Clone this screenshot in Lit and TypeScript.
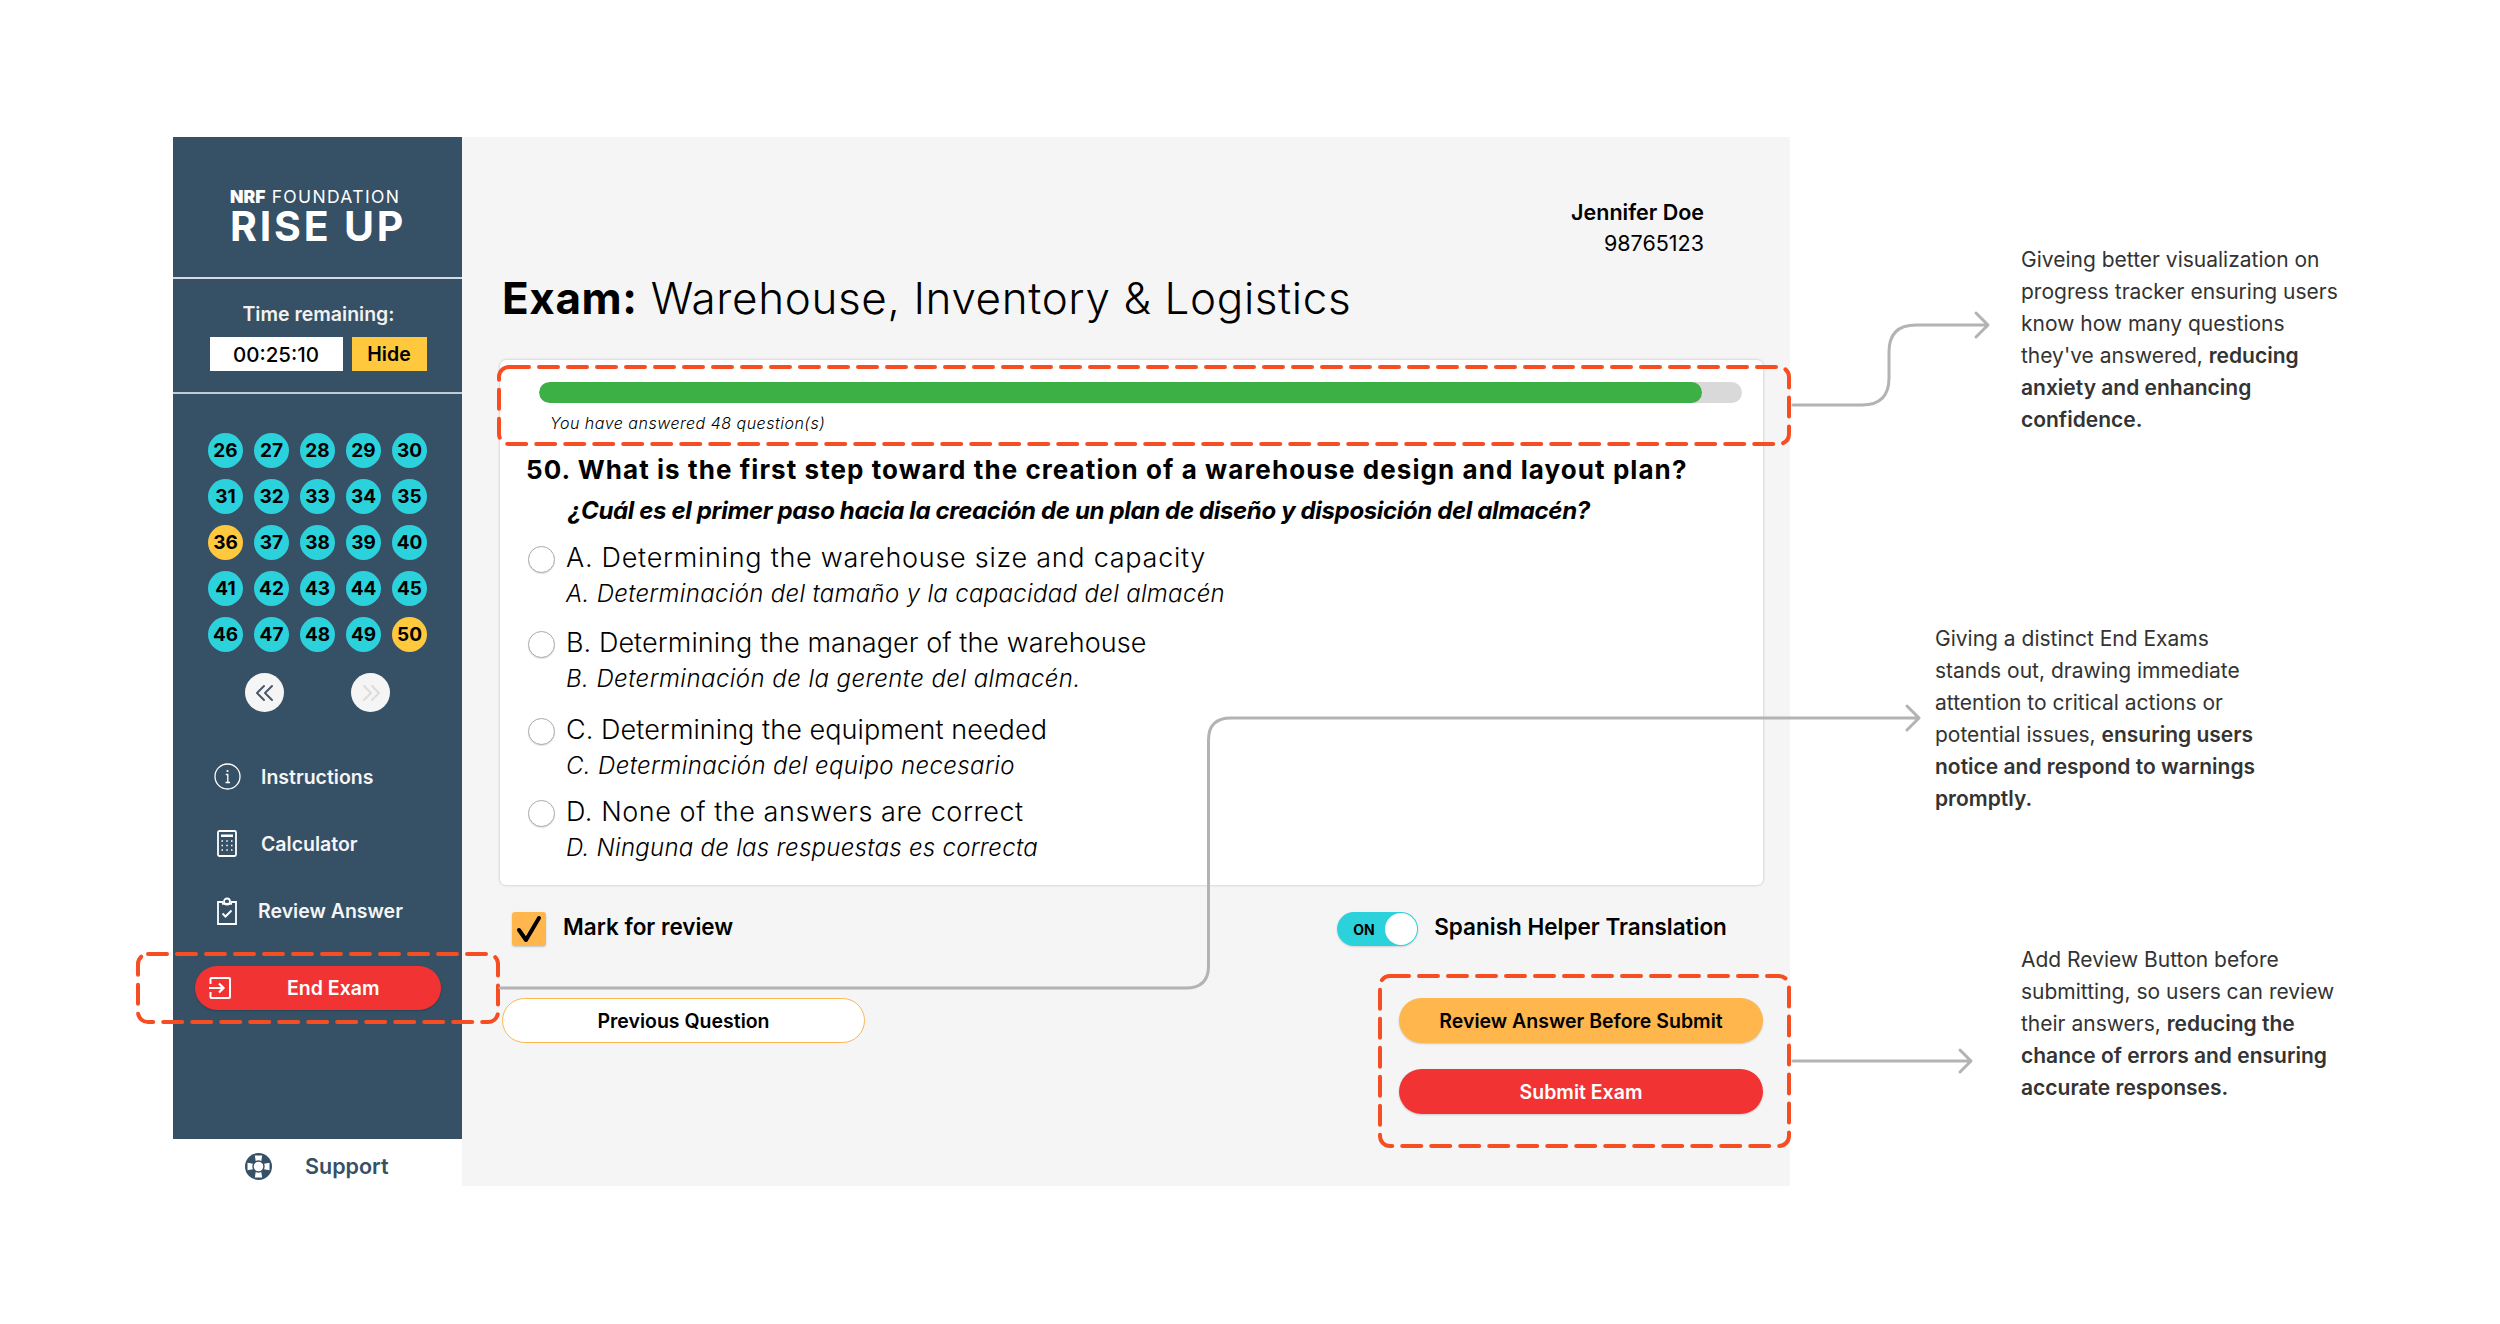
import { LitElement, html, css, svg } from "lit";
import { customElement } from "lit/decorators.js";

const ROWS = [26, 27, 28, 29, 30, 31, 32, 33, 34, 35, 36, 37, 38, 39, 40, 41, 42, 43, 44, 45, 46, 47, 48, 49, 50];
const FLAGGED = new Set([36, 50]);
const OPTIONS = [
  ["A. Determining the warehouse size and capacity", "A. Determinación del tamaño y la capacidad del almacén"],
  ["B. Determining the manager of the warehouse", "B. Determinación de la gerente del almacén."],
  ["C. Determining the equipment needed", "C. Determinación del equipo necesario"],
  ["D. None of the answers are correct", "D. Ninguna de las respuestas es correcta"],
];

@customElement("app-root")
export class AppRoot extends LitElement {
  static styles = css`
    :host { display: block; position: relative; width: 2500px; height: 1324px; background: #fff; overflow: hidden;
      font-family: Inter, "Liberation Sans", sans-serif; color: #000; }
    * { box-sizing: border-box; }
    .page { display: flex; align-items: flex-start; padding: 137px 0 0 173px; }
    .screen { display: grid; grid-template-columns: 289px 1328px; width: 1617px; height: 1049px; flex: none; }

    .side { display: flex; flex-direction: column; }
    .dark { height: 1002px; background: #365066; color: #fff; display: flex; flex-direction: column; }
    .logo { height: 142px; border-bottom: 2px solid #d5dbe0; padding: 51px 0 0 57px; display: flex; flex-direction: column; }
    .logo-top { font-size: 17.5px; line-height: 18px; white-space: nowrap; letter-spacing: 1.35px; font-weight: 400; }
    .logo-top b { font-weight: 900; letter-spacing: 0; }
    .logo-main { font-size: 41px; line-height: 34px; margin-top: 3px; font-weight: 700; letter-spacing: 2.8px; white-space: nowrap; }
    .timer { height: 115px; border-bottom: 2px solid #c3cbd2; display: flex; flex-direction: column; align-items: center; }
    .timer-label { margin-top: 23px; font-size: 19.5px; line-height: 24px; font-weight: 600; color: #f2f2f2; white-space: nowrap; padding-left: 2px; }
    .timer-row { display: flex; gap: 9px; margin-top: 11px; padding-left: 1px; }
    .time { width: 133px; height: 34px; background: #fff; color: #000; font-size: 20.5px; font-weight: 500; display: flex; align-items: center; justify-content: center; }
    .hide { width: 75px; height: 34px; background: #ffc83d; color: #000; font-size: 19.5px; font-weight: 600; display: flex; align-items: center; justify-content: center; }
    .grid { display: grid; grid-template-columns: repeat(5, 35px); gap: 11px; margin: 39px 0 0 35px; }
    .q { width: 35px; height: 35px; border-radius: 50%; background: #2bd2dc; color: #000; font-size: 19px; font-weight: 700; display: flex; align-items: center; justify-content: center; }
    .q.flag { background: #ffc83d; }
    .pager { display: flex; gap: 67px; margin: 21px 0 0 72px; }
    .round { width: 39px; height: 39px; border-radius: 50%; background: #f5f5f5; display: flex; align-items: center; justify-content: center; }
    .nav { display: flex; flex-direction: column; margin-top: 31px; }
    .nav-item { height: 67px; display: flex; align-items: center; font-size: 19.5px; font-weight: 600; color: #f5f5f5; white-space: nowrap; }
    .nav-ico { width: 88px; display: flex; justify-content: flex-start; padding-left: 41px; flex: none; }
    .nav-ico.tight { width: 85px; padding-left: 44px; }
    .nav-ico.mid { padding-left: 44px; }
    .end { margin: 22px 0 0 22px; width: 246px; height: 44px; border-radius: 22px; background: #f23333; color: #fff; display: flex; align-items: center; font-size: 19.5px; font-weight: 600; padding-left: 14px; box-shadow: 0 1px 2px rgba(0,0,0,.2); }
    .end span { margin-left: 56px; }
    .support { height: 46px; display: flex; align-items: center; padding: 8px 0 0 72px; color: #365066; font-size: 21.5px; font-weight: 600; }
    .support span { margin-left: 33px; }

    .main { background: #f5f5f5; padding: 60px 27px 0 38px; display: flex; flex-direction: column; }
    .user { text-align: right; font-size: 21.5px; line-height: 31px; color: #000; margin-right: 59px; }
    .user b { display: block; font-weight: 600; }
    .title { margin: 11px 0 0 2px; font-size: 44px; line-height: 56px; font-weight: 300; letter-spacing: 0.62px; white-space: nowrap; }
    .title b { font-weight: 700; }
    .card { margin-top: 34px; height: 525px; background: #fff; border-radius: 6px; box-shadow: 0 0 3px rgba(0,0,0,.24); padding: 22px 21px 0 27px; }
    .track { margin-left: 12px; height: 21px; border-radius: 10.5px; background: #d9d9d9; overflow: hidden; }
    .fill { height: 100%; border-radius: 10.5px; background: #3cb045; }
    .note { margin: 9px 0 0 23px; font-size: 16px; line-height: 22px; font-style: italic; font-weight: 300; letter-spacing: 0.5px; }
    .ask { margin: 18px 0 0 -1px; font-size: 26px; line-height: 36px; font-weight: 700; letter-spacing: 1.07px; white-space: nowrap; }
    .ask-es { margin: 6px 0 0 41px; font-size: 24px; line-height: 34px; font-weight: 700; font-style: italic; letter-spacing: -0.35px; white-space: nowrap; }
    .opts { margin-top: 12px; display: flex; flex-direction: column; }
    .opt { display: grid; grid-template-columns: 39px 1fr; height: 71px; }
    .opt + .opt { margin-top: 14px; }
    .opt:nth-child(3) { margin-top: 16px; }
    .opt:nth-child(4) { margin-top: 11px; }
    .radio { width: 27px; height: 27px; margin: 6px 0 0 1px; border-radius: 50%; border: 1.5px solid #aaa; background: #fff; box-shadow: 0 1px 1px rgba(0,0,0,.12); }
    .en { font-size: 27px; line-height: 36px; font-weight: 300; white-space: nowrap; }
    .opt:nth-child(1) .en { letter-spacing: 0.73px; }
    .opt:nth-child(2) .en { letter-spacing: 0.06px; }
    .opt:nth-child(3) .en { letter-spacing: 0.06px; }
    .opt:nth-child(4) .en { letter-spacing: 0.56px; }
    .es { font-size: 24px; line-height: 35px; font-style: italic; font-weight: 300; letter-spacing: 0.32px; white-space: nowrap; }
    .opt:nth-child(2) .es { letter-spacing: 0.44px; }
    .opt:nth-child(3) .es { letter-spacing: 0.38px; }
    .opt:nth-child(4) .es { letter-spacing: 0.27px; }

    .controls { margin: 27px 0 0 12px; display: flex; align-items: center; height: 34px; }
    .check { width: 34px; height: 34px; border-radius: 3px; background: #ffb74d; box-shadow: 0 1px 2px rgba(0,0,0,.2); display: flex; align-items: center; justify-content: center; }
    .lbl { font-size: 22.5px; font-weight: 600; line-height: 30px; padding-bottom: 4px; white-space: nowrap; }
    .mark { margin-left: 17px; }
    .toggle { margin-left: 604px; width: 81px; height: 34px; border-radius: 17px; background: #2bd2dc; box-shadow: 0 1px 2px rgba(0,0,0,.15); padding: 1px 1px 1px 0; display: flex; align-items: center; justify-content: space-between; font-size: 14px; font-weight: 700; }
    .toggle span { margin-left: 16px; }
    .knob { width: 32px; height: 32px; border-radius: 50%; background: #fff; }
    .sp { margin-left: 16px; }
    .actions { margin-top: 52px; display: flex; justify-content: space-between; align-items: flex-start; }
    .btn { height: 45px; border-radius: 22.5px; display: flex; align-items: center; justify-content: center; font-size: 19.5px; font-weight: 600; white-space: nowrap; }
    .prev { width: 363px; margin-left: 2px; background: #fff; border: 1.5px solid #ffb74d; }
    .stack { display: flex; flex-direction: column; gap: 26px; }
    .wide { width: 364px; box-shadow: 0 1px 2px rgba(0,0,0,.18); }
    .amber { background: #ffb74d; }
    .red { background: #f23333; color: #fff; }

    .notes { flex: none; display: flex; flex-direction: column; padding-top: 107px; }
    .an { font-size: 21px; line-height: 32px; color: #333; white-space: pre-line; }
    .an b { font-weight: 600; }
    .an1 { margin-left: 231px; }
    .an2 { margin: 187px 0 0 145px; }
    .an3 { margin: 129px 0 0 231px; }

    .over { position: absolute; left: 0; top: 0; width: 2500px; height: 1324px; pointer-events: none; }
    .dash { fill: none; stroke: #f64d23; stroke-width: 4; stroke-dasharray: 19 10; stroke-linecap: round; }
    .conn { fill: none; stroke: #b3b3b3; stroke-width: 3; stroke-linecap: round; stroke-linejoin: round; }
  `;

  private chevrons(color: string, flip: boolean) {
    return html`<svg width="20" height="18" viewBox="0 0 20 18" fill="none" stroke=${color} stroke-width="2" stroke-linecap="round" stroke-linejoin="round">
      <g transform=${flip ? "translate(20,0) scale(-1,1)" : ""}>
        ${svg`<path d="M9 2 2 9l7 7M17 2l-7 7 7 7" />`}
      </g></svg>`;
  }

  private overlay() {
    return svg`
      <path class="dash" d="M510 367H1779a10 10 0 0 1 10 10V434a10 10 0 0 1-10 10H509a10 10 0 0 1-10-10V377a10 10 0 0 1 10-10z" />
      <path class="dash" d="M148 954H488a10 10 0 0 1 10 10V1012a10 10 0 0 1-10 10H148a10 10 0 0 1-10-10V964a10 10 0 0 1 10-10z" />
      <path class="dash" d="M1390 976H1779a10 10 0 0 1 10 10V1136a10 10 0 0 1-10 10H1390a10 10 0 0 1-10-10V986a10 10 0 0 1 10-10z" />
      <path class="conn" d="M1793 405H1862Q1889 405 1889 378V352Q1889 325 1916 325H1987M1976 313 1988 325 1976 337" />
      <path class="conn" d="M500 988H1186Q1208.5 988 1208.500 966V740Q1208.500 718 1231 718H1918M1907 706 1919 718 1907 730" />
      <path class="conn" d="M1793 1061H1970M1960 1050 1971 1061 1960 1072" />
    `;
  }

  render() {
    return html`
      <div class="page">
        <div class="screen">
          <aside class="side">
            <div class="dark">
              <div class="logo">
                <div class="logo-top"><b>NRF</b> FOUNDATION</div>
                <div class="logo-main">RISE UP</div>
              </div>
              <div class="timer">
                <div class="timer-label">Time remaining:</div>
                <div class="timer-row"><div class="time">00:25:10</div><div class="hide">Hide</div></div>
              </div>
              <div class="grid">
                ${ROWS.map((n) => html`<div class="q ${FLAGGED.has(n) ? "flag" : ""}">${n}</div>`)}
              </div>
              <div class="pager">
                <div class="round">${this.chevrons("#47596b", false)}</div>
                <div class="round">${this.chevrons("#dcdcdc", true)}</div>
              </div>
              <nav class="nav">
                <div class="nav-item">
                  <div class="nav-ico">
                    <svg width="27" height="27" viewBox="0 0 27 27" fill="none" stroke="#fff">
                      <circle cx="13.500" cy="13.500" r="12.500" stroke-width="1.300" />
                      <path d="M11.800 11.500H13.800V19.500M11.500 19.500H16" stroke-width="1.300" />
                      <circle cx="13.500" cy="8" r="1.100" fill="#fff" stroke="none" />
                    </svg>
                  </div>Instructions
                </div>
                <div class="nav-item">
                  <div class="nav-ico mid">
                    <svg width="20" height="27" viewBox="0 0 20 27" fill="none">
                      <rect x="1" y="1" width="18" height="25" rx="1.500" stroke="#fff" stroke-width="1.800" />
                      <rect x="4" y="4.500" width="12" height="2.500" fill="#fff" />
                      <path d="M4.500 11h1.500M9.300 11h1.500M14 11h1.500M4.500 15.500h1.500M9.300 15.500h1.500M14 15.500h1.500M4.500 20h1.500M9.300 20h1.500M14 20h1.500" stroke="#fff" stroke-width="1.600" />
                    </svg>
                  </div>Calculator
                </div>
                <div class="nav-item">
                  <div class="nav-ico tight">
                    <svg width="20" height="28" viewBox="0 0 20 28" fill="none" stroke="#fff">
                      <path d="M6 5H1V27H19V5H14" stroke-width="1.800" />
                      <circle cx="10" cy="4.500" r="3" stroke-width="1.800" />
                      <path d="M5 6.800H15" stroke-width="1.800" />
                      <path d="M5.500 16.500 8.500 19.500 14.500 13.500" stroke-width="2" />
                    </svg>
                  </div>Review Answer
                </div>
              </nav>
              <div class="end">
                <svg width="22" height="22" viewBox="0 0 22 22" fill="none" stroke="#fff" stroke-width="2">
                  <path d="M1.500 7V2a1 1 0 0 1 1-1H20a1 1 0 0 1 1 1V20a1 1 0 0 1-1 1H2.500a1 1 0 0 1-1-1V15" />
                  <path d="M0 11H14M10 6.500 14.500 11 10 15.500" stroke-width="2.200" />
                </svg>
                <span>End Exam</span>
              </div>
            </div>
            <div class="support">
              <svg width="27" height="27" viewBox="0 0 27 27">
                <circle cx="13.500" cy="13.500" r="13.500" fill="#365066" />
                <path d="M9.800 2.500H17.200L16.300 8H10.700zM9.800 24.500H17.200L16.300 19H10.700zM2.500 9.800V17.200L8 16.300V10.700zM24.500 9.800V17.200L19 16.300V10.700z" fill="#fff" />
                <circle cx="13.500" cy="13.500" r="5.500" fill="#fff" stroke="#365066" stroke-width="1.400" />
              </svg>
              <span>Support</span>
            </div>
          </aside>
          <main class="main">
            <div class="user"><b>Jennifer Doe</b>98765123</div>
            <div class="title"><b>Exam:</b> Warehouse, Inventory &amp; Logistics</div>
            <section class="card">
              <div class="track"><div class="fill" style="width:${(48 / 50 + 0.007) * 100}%"></div></div>
              <div class="note">You have answered 48 question(s)</div>
              <div class="ask">50. What is the first step toward the creation of a warehouse design and layout plan?</div>
              <div class="ask-es">¿Cuál es el primer paso hacia la creación de un plan de diseño y disposición del almacén?</div>
              <div class="opts">
                ${OPTIONS.map(([en, es]) => html`<div class="opt"><div class="radio"></div><div><div class="en">${en}</div><div class="es">${es}</div></div></div>`)}
              </div>
            </section>
            <div class="controls">
              <div class="check">
                <svg width="26" height="28" viewBox="0 0 26 28" fill="none"><path d="M3 15 10 25 23 3" stroke="#000" stroke-width="4" stroke-linecap="round" stroke-linejoin="round" /></svg>
              </div>
              <div class="lbl mark">Mark for review</div>
              <div class="toggle"><span>ON</span><div class="knob"></div></div>
              <div class="lbl sp">Spanish Helper Translation</div>
            </div>
            <div class="actions">
              <div class="btn prev">Previous Question</div>
              <div class="stack">
                <div class="btn wide amber">Review Answer Before Submit</div>
                <div class="btn wide red">Submit Exam</div>
              </div>
            </div>
          </main>
        </div>
        <div class="notes">
          <div class="an an1">Giveing better visualization on
progress tracker ensuring users
know how many questions
they've answered, <b>reducing
anxiety and enhancing
confidence.</b></div>
          <div class="an an2">Giving a distinct End Exams
stands out, drawing immediate
attention to critical actions or
potential issues, <b>ensuring users
notice and respond to warnings
promptly.</b></div>
          <div class="an an3">Add Review Button before
submitting, so users can review
their answers, <b>reducing the
chance of errors and ensuring
accurate responses.</b></div>
        </div>
      </div>
      <svg class="over" viewBox="0 0 2500 1324">${this.overlay()}</svg>
    `;
  }
}
